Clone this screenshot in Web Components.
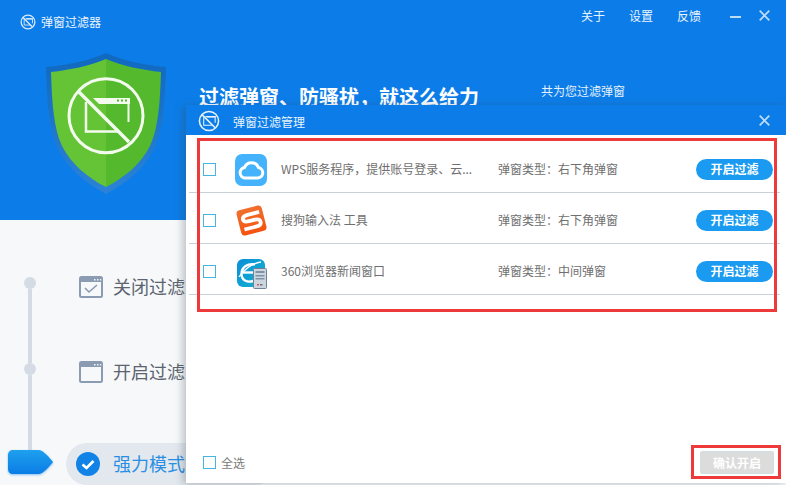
<!DOCTYPE html>
<html lang="zh">
<head>
<meta charset="utf-8">
<title>弹窗过滤器</title>
<style>
  html, body { margin: 0; background: #fff; }
  body { font-family: "Noto Sans CJK SC", "Liberation Sans", sans-serif; font-size: 12px; }
</style>
</head>
<body>
<popup-app>
  <top-bar slot="bar"></top-bar>
  <hero-banner slot="hero"></hero-banner>
  <mode-panel slot="modes"></mode-panel>
  <filter-dialog slot="dialog">
    <filter-row kind="cloud" name="WPS服务程序，提供账号登录、云..." type="弹窗类型：右下角弹窗"></filter-row>
    <filter-row kind="sogou" name="搜狗输入法 工具" type="弹窗类型：右下角弹窗"></filter-row>
    <filter-row kind="browser" name="360浏览器新闻窗口" type="弹窗类型：中间弹窗"></filter-row>
  </filter-dialog>
</popup-app>

<script>
const noPopup = (stroke, w) => `
  <circle cx="50" cy="50" r="${47 - w / 2}" fill="none" stroke="${stroke}" stroke-width="${w}"/>
  <path d="M26 33V69H65" fill="none" stroke="${stroke}" stroke-width="${w * 0.7}"/>
  <path d="M34 30H78V58" fill="none" stroke="${stroke}" stroke-width="${w * 0.7}"/>
  <path d="M36 27H80V34H42z" fill="${stroke}"/>
  <path d="M17 20L78 81" stroke="${stroke}" stroke-width="${w}"/>`;

const closeIcon = `<svg width="11" height="11" viewBox="0 0 11 11"><path d="M.7.7l9.6 9.6M10.3.7L.7 10.3" stroke="#bcdcf8" stroke-width="1.8" fill="none"/></svg>`;

class PopupApp extends HTMLElement {
  connectedCallback() {
    this.attachShadow({ mode: 'open' });
    this.shadowRoot.innerHTML = `
      <style>
        :host { display: block; position: relative; width: 786px; height: 485px; background: #f6f8f9; overflow: hidden; }
        .head { background: #0c7de8; height: 220px; display: flex; flex-direction: column; }
        ::slotted([slot="dialog"]) { position: absolute; left: 186px; top: 105px; }
      </style>
      <div class="head"><slot name="bar"></slot><slot name="hero"></slot></div>
      <slot name="modes"></slot>
      <slot name="dialog"></slot>
    `;
  }
}

class TopBar extends HTMLElement {
  connectedCallback() {
    this.attachShadow({ mode: 'open' });
    this.shadowRoot.innerHTML = `
      <style>
        :host { display: flex; align-items: center; height: 44px; color: #eaf4fe; font-size: 12px; padding: 0 16px 0 20px; }
        .brand { display: flex; align-items: center; gap: 5px; flex: 1; }
        .brand span { margin-top: -2px; }
        svg { display: block; }
        .links { display: flex; gap: 24px; margin-right: 29px; margin-top: -14px; }
        .win { display: flex; align-items: center; gap: 18px; margin-top: -14px; }
        .min { width: 11px; height: 2px; background: #bcdcf8; margin-top: 3px; }
      </style>
      <div class="brand">
        <svg width="16" height="16" viewBox="0 0 100 100">${noPopup('#d9ecfd', 8)}</svg>
        <span>弹窗过滤器</span>
      </div>
      <div class="links"><span>关于</span><span>设置</span><span>反馈</span></div>
      <div class="win"><div class="min"></div>${closeIcon}</div>
    `;
  }
}

class HeroBanner extends HTMLElement {
  connectedCallback() {
    this.attachShadow({ mode: 'open' });
    this.shadowRoot.innerHTML = `
      <style>
        :host { display: flex; flex: 1; padding: 9px 0 0 46px; color: #fff; }
        svg { display: block; flex: none; margin-right: 33px; }
        h1 { margin: 30px 0 0; font-size: 20px; line-height: 28px; font-weight: 700; white-space: nowrap; }
        p { margin: 29px 0 0 62px; font-size: 12px; line-height: 18px; color: #e4f1fd; white-space: nowrap; }
      </style>
      <svg width="120" height="141" viewBox="0 0 120 141">
        <defs><linearGradient id="edge" x1="0" y1="0" x2="0" y2="1">
          <stop offset="0" stop-color="#1069bf"/><stop offset="1" stop-color="#2c82d6"/>
        </linearGradient></defs>
        <path d="M60 0C42 8 22 12 0 14C1 50 3 78 12 96C22 116 40 130 60 141C80 130 98 116 108 96C117 78 119 50 120 14C98 12 78 8 60 0Z" fill="url(#edge)"/>
        <path d="M60 6C43 13 24 17 5 19C6 52 8 76 16 93C25 111 42 125 60 134Z" fill="#65c436"/>
        <path d="M60 6C77 13 96 17 115 19C114 52 112 76 104 93C95 111 78 125 60 134Z" fill="#54b92c"/>
        <circle cx="60" cy="62.700" r="37" fill="none" stroke="#f3fbee" stroke-width="3"/>
        <path d="M40 49V78.500H72" fill="none" stroke="#f3fbee" stroke-width="2.500"/>
        <path d="M82.500 46V69" fill="none" stroke="#f3fbee" stroke-width="2"/>
        <path d="M47 45H84V51H53z" fill="#f3fbee"/>
        <path d="M33 39L83 89" stroke="#f3fbee" stroke-width="3.400"/>
        <path d="M71 46.500h2v2h-2zM75 46.500h2v2h-2zM79 46.500h2v2h-2z" fill="#54b92c"/>
      </svg>
      <h1>过滤弹窗、防骚扰，就这么给力</h1>
      <p>共为您过滤弹窗</p>
    `;
  }
}

class ModePanel extends HTMLElement {
  connectedCallback() {
    this.attachShadow({ mode: 'open' });
    this.shadowRoot.innerHTML = `
      <style>
        :host { display: flex; height: 265px; box-sizing: border-box; color: #5b6470; }
        .rail { width: 44px; margin-left: 8px; padding-top: 57px; display: flex; flex-direction: column; align-items: center; flex: none; }
        .dot { width: 12px; height: 12px; border-radius: 50%; background: #d5dbe5; flex: none; }
        .line { width: 4px; background: #d5dbe5; flex: none; }
        .marker { display: block; flex: none; align-self: flex-start; margin-top: -1px; filter: drop-shadow(0 1px 1px rgba(12,125,232,.45)); }
        .items { margin-left: 14px; padding-top: 46px; display: flex; flex-direction: column; }
        .item { display: flex; align-items: center; height: 42px; padding-left: 13px; font-size: 18px; gap: 10px; white-space: nowrap; }
        .item span { margin-top: -2px; }
        .item + .item { margin-top: 43px; }
        .item.on { margin-top: 50px; width: 200px; padding-left: 10px; gap: 13px; border-radius: 21px; background: #e3e8ee; color: #2a8fe3; }
        svg { display: block; flex: none; }
      </style>
      <div class="rail">
        <div class="dot"></div><div class="line" style="height:74px"></div>
        <div class="dot"></div><div class="line" style="height:76px"></div>
        <svg class="marker" width="45" height="24" viewBox="0 0 45 24">
          <defs><linearGradient id="mk" x1="0" y1="0" x2="0" y2="1">
            <stop offset="0" stop-color="#1fa0ee"/><stop offset="1" stop-color="#0b7de6"/>
          </linearGradient></defs>
          <path d="M5 0H31C36 1 41 7 45 12C41 17 36 23 31 24H5C2 24 0 22 0 19V5C0 2 2 0 5 0Z" fill="url(#mk)"/>
        </svg>
      </div>
      <div class="items">
        <div class="item">
          <svg width="24" height="22" viewBox="0 0 24 22">
            <rect x="1" y="1" width="22" height="20" rx="1.500" fill="none" stroke="#8a9bb2" stroke-width="2"/>
            <path d="M1 1h22v5H1z" fill="#8a9bb2"/><path d="M15 3h1.500v1.500H15zM18 3h1.500v1.500H18zM21 3h1.200v1.500H21z" fill="#f6f8f9"/>
            <path d="M6 12l4 4 8-7" fill="none" stroke="#8a9bb2" stroke-width="1.600"/>
          </svg>
          <span>关闭过滤</span>
        </div>
        <div class="item">
          <svg width="24" height="22" viewBox="0 0 24 22">
            <rect x="1" y="1" width="22" height="20" rx="1.500" fill="none" stroke="#8a9bb2" stroke-width="2"/>
            <path d="M1 1h22v5H1z" fill="#8a9bb2"/><path d="M15 3h1.500v1.500H15zM18 3h1.500v1.500H18zM21 3h1.200v1.500H21z" fill="#f6f8f9"/>
          </svg>
          <span>开启过滤</span>
        </div>
        <div class="item on">
          <svg width="24" height="24" viewBox="0 0 24 24">
            <circle cx="12" cy="12" r="12" fill="#1183e6"/>
            <path d="M6.500 12.500l4 3.500 7-7" fill="none" stroke="#fff" stroke-width="2.600"/>
          </svg>
          <span>强力模式</span>
        </div>
      </div>
    `;
  }
}

class FilterDialog extends HTMLElement {
  connectedCallback() {
    this.attachShadow({ mode: 'open' });
    this.shadowRoot.innerHTML = `
      <style>
        :host { display: flex; flex-direction: column; width: 600px; height: 378px; background: #fff; box-shadow: -3px 1px 8px rgba(60,70,80,.32); color: #6f6f6f; }
        .head { height: 30px; background: #0c7de8; color: #e8f3fd; display: flex; align-items: center; padding: 0 16px 0 12px; flex: none; }
        .head svg.logo { margin-right: 13px; margin-top: 2px; }
        .head span { flex: 1; margin-top: 2px; }
        .list { flex: 1; padding: 7px 6px 0 3px; }
        .foot { display: flex; align-items: center; height: 31px; padding: 0 12px 0 17px; margin-bottom: 5px; gap: 5px; color: #7b7b7b; }
        .box { width: 11px; height: 11px; border: 1px solid #45b4e0; background: #fff; flex: none; }
        .foot span { flex: 1; margin-top: -1px; }
        button { width: 74px; height: 23px; padding: 0; border: 1px solid #cfe0e2; border-radius: 2px; background: #dcdcdc; color: #fff; font: 700 12px "Noto Sans CJK SC", "Liberation Sans", sans-serif; }
        .mark { position: absolute; border: 3px solid #ee3a3a; box-sizing: border-box; pointer-events: none; }
        .mark.a { left: 11px; top: 33px; width: 580px; height: 174px; }
        .mark.b { left: 505px; top: 340px; width: 90px; height: 34px; }
        svg { display: block; }
      </style>
      <div class="head">
        <svg class="logo" width="22" height="22" viewBox="0 0 100 100">${noPopup('#e8f3fd', 7)}</svg>
        <span>弹窗过滤管理</span>
        ${closeIcon}
      </div>
      <div class="list"><slot></slot></div>
      <div class="foot"><div class="box"></div><span>全选</span><button>确认开启</button></div>
      <div class="mark a"></div>
      <div class="mark b"></div>
    `;
  }
}

const rowIcons = {
  cloud: `<svg width="32" height="32" viewBox="0 0 32 32">
      <rect width="32" height="32" rx="7" fill="#45b3fb"/>
      <path d="M10 24H22.500A5.300 5.300 0 0 0 23.500 13.500A7.500 7.500 0 0 0 9.500 13.500A5.300 5.300 0 0 0 10 24Z" fill="none" stroke="#fff" stroke-width="3"/>
    </svg>`,
  sogou: `<svg width="33" height="33" viewBox="0 0 33 33">
      <defs><linearGradient id="sg" x1="0" y1="0" x2="0" y2="1">
        <stop offset="0" stop-color="#f0702f"/><stop offset="1" stop-color="#f4530f"/>
      </linearGradient></defs>
      <g transform="rotate(-14 16.500 16.500)">
        <rect x="3.500" y="3.500" width="26" height="26" rx="3.500" fill="url(#sg)"/>
        <path d="M26 10H14Q8.500 10 8.500 13.500Q8.500 16.500 14 16.500H20Q25 16.500 25 20Q25 23.500 20 23.500H7.500" fill="none" stroke="#fff" stroke-width="3.800"/>
      </g>
    </svg>`,
  browser: `<svg width="32" height="32" viewBox="0 0 32 32" style="overflow:visible">
      <defs><linearGradient id="bw" x1="0" y1="0" x2="1" y2="1">
        <stop offset="0" stop-color="#0a8fd8"/><stop offset="1" stop-color="#14b3cf"/>
      </linearGradient></defs>
      <rect x="2" y="3" width="28" height="28" rx="6" fill="url(#bw)"/>
      <path d="M20 8.500C13 7 6.500 11 6.500 18C6.500 24 12 27 18 25" fill="none" stroke="#fff" stroke-width="2.400"/>
      <path d="M7 16.500H19" stroke="#fff" stroke-width="2.400"/>
      <path d="M4 21C9 13 18 7 26 6" fill="none" stroke="#fff" stroke-width="1.400"/>
      <rect x="18.500" y="12.500" width="13" height="20" rx="1" fill="#cdd6de" stroke="#6f8298"/>
      <path d="M20.500 15h9v2h-9zM20.500 19h9v1.500h-9zM20.500 22h9v1.500h-9z" fill="#7f93a8"/>
      <path d="M22 28h2v1.500h-2z" fill="#d9534f"/><path d="M25 28h2.500v1.500H25z" fill="#5f7488"/>
    </svg>`
};

class FilterRow extends HTMLElement {
  connectedCallback() {
    this.attachShadow({ mode: 'open' });
    this.shadowRoot.innerHTML = `
      <style>
        :host { display: grid; grid-template-columns: 46px 46px 217px 198px 77px; align-items: center; height: 45px; padding-top: 5px; border-bottom: 1px solid #c8d0d8; color: #6f6f6f; font-size: 12px; }
        .box { width: 11px; height: 11px; border: 1px solid #45b4e0; margin-left: 14px; background: #fff; }
        svg { display: block; }
        .pill { height: 21px; border-radius: 11px; background: #1a9af0; color: #fff; font-weight: 700; text-align: center; line-height: 19px; }
        .name, .type { white-space: nowrap; margin-top: -3px; }
      </style>
      <div class="box"></div>
      <div>${rowIcons[this.getAttribute('kind')]}</div>
      <div class="name">${this.getAttribute('name')}</div>
      <div class="type">${this.getAttribute('type')}</div>
      <div class="pill">开启过滤</div>
    `;
  }
}

customElements.define('popup-app', PopupApp);
customElements.define('top-bar', TopBar);
customElements.define('hero-banner', HeroBanner);
customElements.define('mode-panel', ModePanel);
customElements.define('filter-dialog', FilterDialog);
customElements.define('filter-row', FilterRow);
</script>
</body>
</html>
